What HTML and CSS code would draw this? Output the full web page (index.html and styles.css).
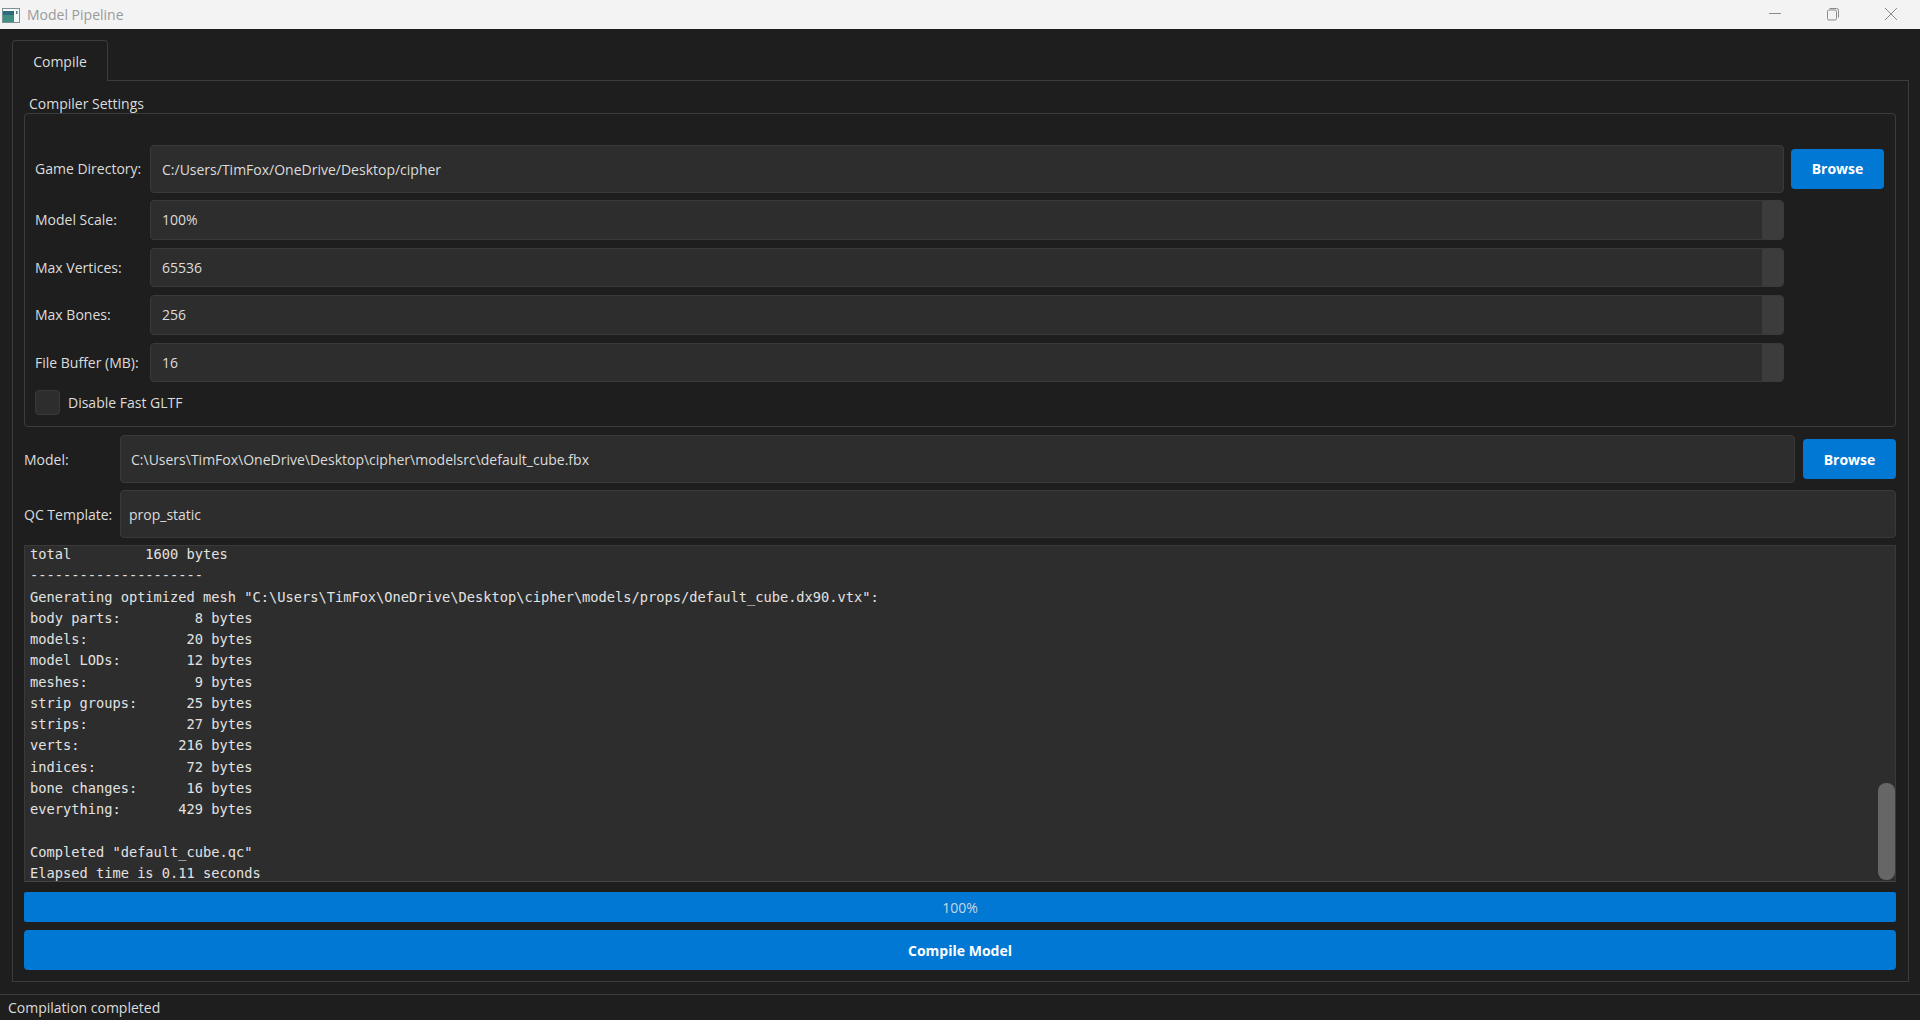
FILE: index.html
```html
<!DOCTYPE html>
<html lang="en">
<head>
<meta charset="utf-8">
<title>Model Pipeline</title>
<link rel="stylesheet" href="styles.css">
</head>
<body>
<div class="window">
  <header class="titlebar">
    <svg class="app-icon" width="20" height="18" viewBox="0 0 20 18">
      <rect x="2.5" y="2.5" width="17" height="14" fill="#f4f8f8" stroke="#7c8f92"/>
      <rect x="3" y="5" width="11" height="11" fill="#3f8f84"/>
      <rect x="3" y="5" width="11" height="4" fill="#2f6a7c"/>
      <rect x="16" y="5" width="1.5" height="3" fill="#4a7f88"/>
    </svg>
    <span class="title-text">Model Pipeline</span>
    <div class="controls">
      <svg class="control" width="58" height="29" viewBox="0 0 58 29"><path d="M23 13.5h12" stroke="#8a8a8a" fill="none"/></svg>
      <svg class="control" width="58" height="29" viewBox="0 0 58 29"><path d="M23.5 11.5a1.5 1.5 0 0 1 1.5-1.5h6a1.5 1.5 0 0 1 1.5 1.5v7a1.5 1.5 0 0 1-1.5 1.5h-6a1.5 1.5 0 0 1-1.5-1.5zM25.5 8.5h7a2 2 0 0 1 2 2v7" stroke="#8a8a8a" fill="none"/></svg>
      <svg class="control" width="58" height="29" viewBox="0 0 58 29"><path d="M23 8l12 12M35 8l-12 12" stroke="#8a8a8a" fill="none"/></svg>
    </div>
  </header>
  <main class="content">
    <div class="tab">Compile</div>
    <section class="pane">
      <div class="group-title">Compiler Settings</div>
      <div class="group">
        <div class="form">
          <label class="label">Game Directory:</label>
          <div class="field field-first">C:/Users/TimFox/OneDrive/Desktop/cipher</div>
          <button class="btn btn-browse">Browse</button>
          <label class="label">Model Scale:</label>
          <div class="field spin"><span class="spin-value">100%</span><span class="spin-buttons"></span></div>
          <span></span>
          <label class="label">Max Vertices:</label>
          <div class="field spin"><span class="spin-value">65536</span><span class="spin-buttons"></span></div>
          <span></span>
          <label class="label">Max Bones:</label>
          <div class="field spin"><span class="spin-value">256</span><span class="spin-buttons"></span></div>
          <span></span>
          <label class="label">File Buffer (MB):</label>
          <div class="field spin"><span class="spin-value">16</span><span class="spin-buttons"></span></div>
          <span></span>
          <div class="check-row"><span class="checkbox"></span><span>Disable Fast GLTF</span></div>
        </div>
      </div>
      <div class="path-row path-row-model">
        <label class="path-label">Model:</label>
        <div class="field path-field">C:\Users\TimFox\OneDrive\Desktop\cipher\modelsrc\default_cube.fbx</div>
        <button class="btn btn-browse">Browse</button>
      </div>
      <div class="path-row path-row-qc">
        <label class="path-label">QC Template:</label>
        <div class="field qc-field">prop_static</div>
      </div>
      <div class="log">
<pre class="log-lines">total         1600 bytes
---------------------
Generating optimized mesh "C:\Users\TimFox\OneDrive\Desktop\cipher\models/props/default_cube.dx90.vtx":
body parts:         8 bytes
models:            20 bytes
model LODs:        12 bytes
meshes:             9 bytes
strip groups:      25 bytes
strips:            27 bytes
verts:            216 bytes
indices:           72 bytes
bone changes:      16 bytes
everything:       429 bytes

Completed "default_cube.qc"
Elapsed time is 0.11 seconds</pre>
        <div class="scroll-thumb"></div>
      </div>
      <div class="progress">100%</div>
      <button class="btn btn-compile">Compile Model</button>
    </section>
  </main>
  <footer class="statusbar">Compilation completed</footer>
</div>
</body>
</html>
```
FILE: styles.css
```css
* { box-sizing: border-box; }
html, body { margin: 0; height: 100%; }
body {
  background: #1e1e1e;
  color: #dcdcdc;
  font-family: "Open Sans", "Noto Sans", sans-serif;
  font-size: 14px;
  overflow: hidden;
}
.window { display: flex; flex-direction: column; height: 1020px; }
.titlebar {
  display: flex;
  align-items: center;
  height: 29px;
  flex: none;
  background: #f3f3f3;
}
.app-icon { margin-left: 0; flex: none; }
.title-text { margin-left: 7px; color: #9a9a9a; font-size: 14px; }
.controls { margin-left: auto; display: flex; padding-right: 0; }
.control { display: block; }
.content {
  flex: 1;
  display: flex;
  flex-direction: column;
  padding: 11px 11px 12px 12px;
  min-height: 0;
}
.tab {
  width: 96px;
  height: 41px;
  flex: none;
  display: flex;
  align-items: center;
  justify-content: center;
  border: 1px solid #3c3c3c;
  border-bottom: none;
  border-radius: 4px 4px 0 0;
  background: #1e1e1e;
  position: relative;
  margin-bottom: -1px;
  z-index: 1;
}
.pane {
  flex: 1;
  display: flex;
  flex-direction: column;
  border: 1px solid #3c3c3c;
  padding: 14px 12px 11px 11px;
  min-height: 0;
}
.group-title { height: 18px; line-height: 18px; margin-left: 5px; }
.group {
  border: 1px solid #3c3c3c;
  border-radius: 4px;
  padding: 31px 11px 11px 10px;
  flex: none;
  height: 314px;
}
.form {
  display: grid;
  grid-template-columns: 115px 1fr 93px;
  grid-template-rows: 47px repeat(4, 39.5px) 25px;
  column-gap: 0;
  row-gap: 8px;
  align-items: center;
}
.label { white-space: nowrap; }
.field {
  background: #2d2d2d;
  border: 1px solid #3a3a3a;
  border-radius: 4px;
  display: flex;
  align-items: center;
  white-space: nowrap;
}
.field-first {
  height: 48px;
  margin-bottom: -1px;
  margin-right: 7px;
  padding-left: 11px;
  align-self: start;
}
.spin {
  height: 100%;
  margin-right: 7px;
  padding-left: 11px;
  justify-content: space-between;
  overflow: hidden;
}
.spin-buttons {
  width: 21px;
  align-self: stretch;
  background: #3c3c3c;
}
.btn {
  border: none;
  background: #0078d4;
  color: #fff;
  font: 700 14px "Open Sans", "Noto Sans", sans-serif;
  border-radius: 4px;
  padding: 0;
}
.btn-browse { height: 40px; width: 93px; justify-self: start; }
.check-row {
  grid-column: 1 / -1;
  display: flex;
  align-items: center;
  gap: 8px;
}
.checkbox {
  width: 25px;
  height: 25px;
  background: #2d2d2d;
  border: 1px solid #3a3a3a;
  border-radius: 4px;
}
.path-row { display: flex; align-items: center; flex: none; height: 48px; }
.path-row-model { margin-top: 8px; }
.path-row-qc { margin-top: 7px; }
.path-label { width: 96px; flex: none; white-space: nowrap; }
.path-field {
  flex: 1;
  height: 48px;
  margin-right: 8px;
  padding-left: 10px;
}
.qc-field { flex: 1; height: 48px; padding-left: 8px; }
.log {
  flex: none;
  height: 337px;
  margin-top: 7px;
  background: #2d2d2d;
  border: 1px solid #3a3a3a;
  border-bottom-color: #444;
  position: relative;
  overflow: hidden;
}
.log-lines {
  margin: -2px 0 0;
  padding-left: 5px;
  font-family: "DejaVu Sans Mono", "Liberation Mono", monospace;
  font-size: 13.7px;
  line-height: 21.27px;
  color: #e2e2e2;
}
.scroll-thumb {
  position: absolute;
  right: 0;
  top: 237px;
  width: 17px;
  height: 97px;
  border-radius: 8px;
  background: #666;
}
.progress {
  margin-top: 10px;
  height: 30px;
  flex: none;
  background: #0078d4;
  border-radius: 2px;
  display: flex;
  align-items: center;
  justify-content: center;
  color: #c8d6e2;
}
.btn-compile { margin-top: 8px; height: 40px; flex: none; }
.statusbar {
  height: 26px;
  flex: none;
  border-top: 1px solid #3c3c3c;
  padding-left: 8px;
  display: flex;
  align-items: center;
}
```
